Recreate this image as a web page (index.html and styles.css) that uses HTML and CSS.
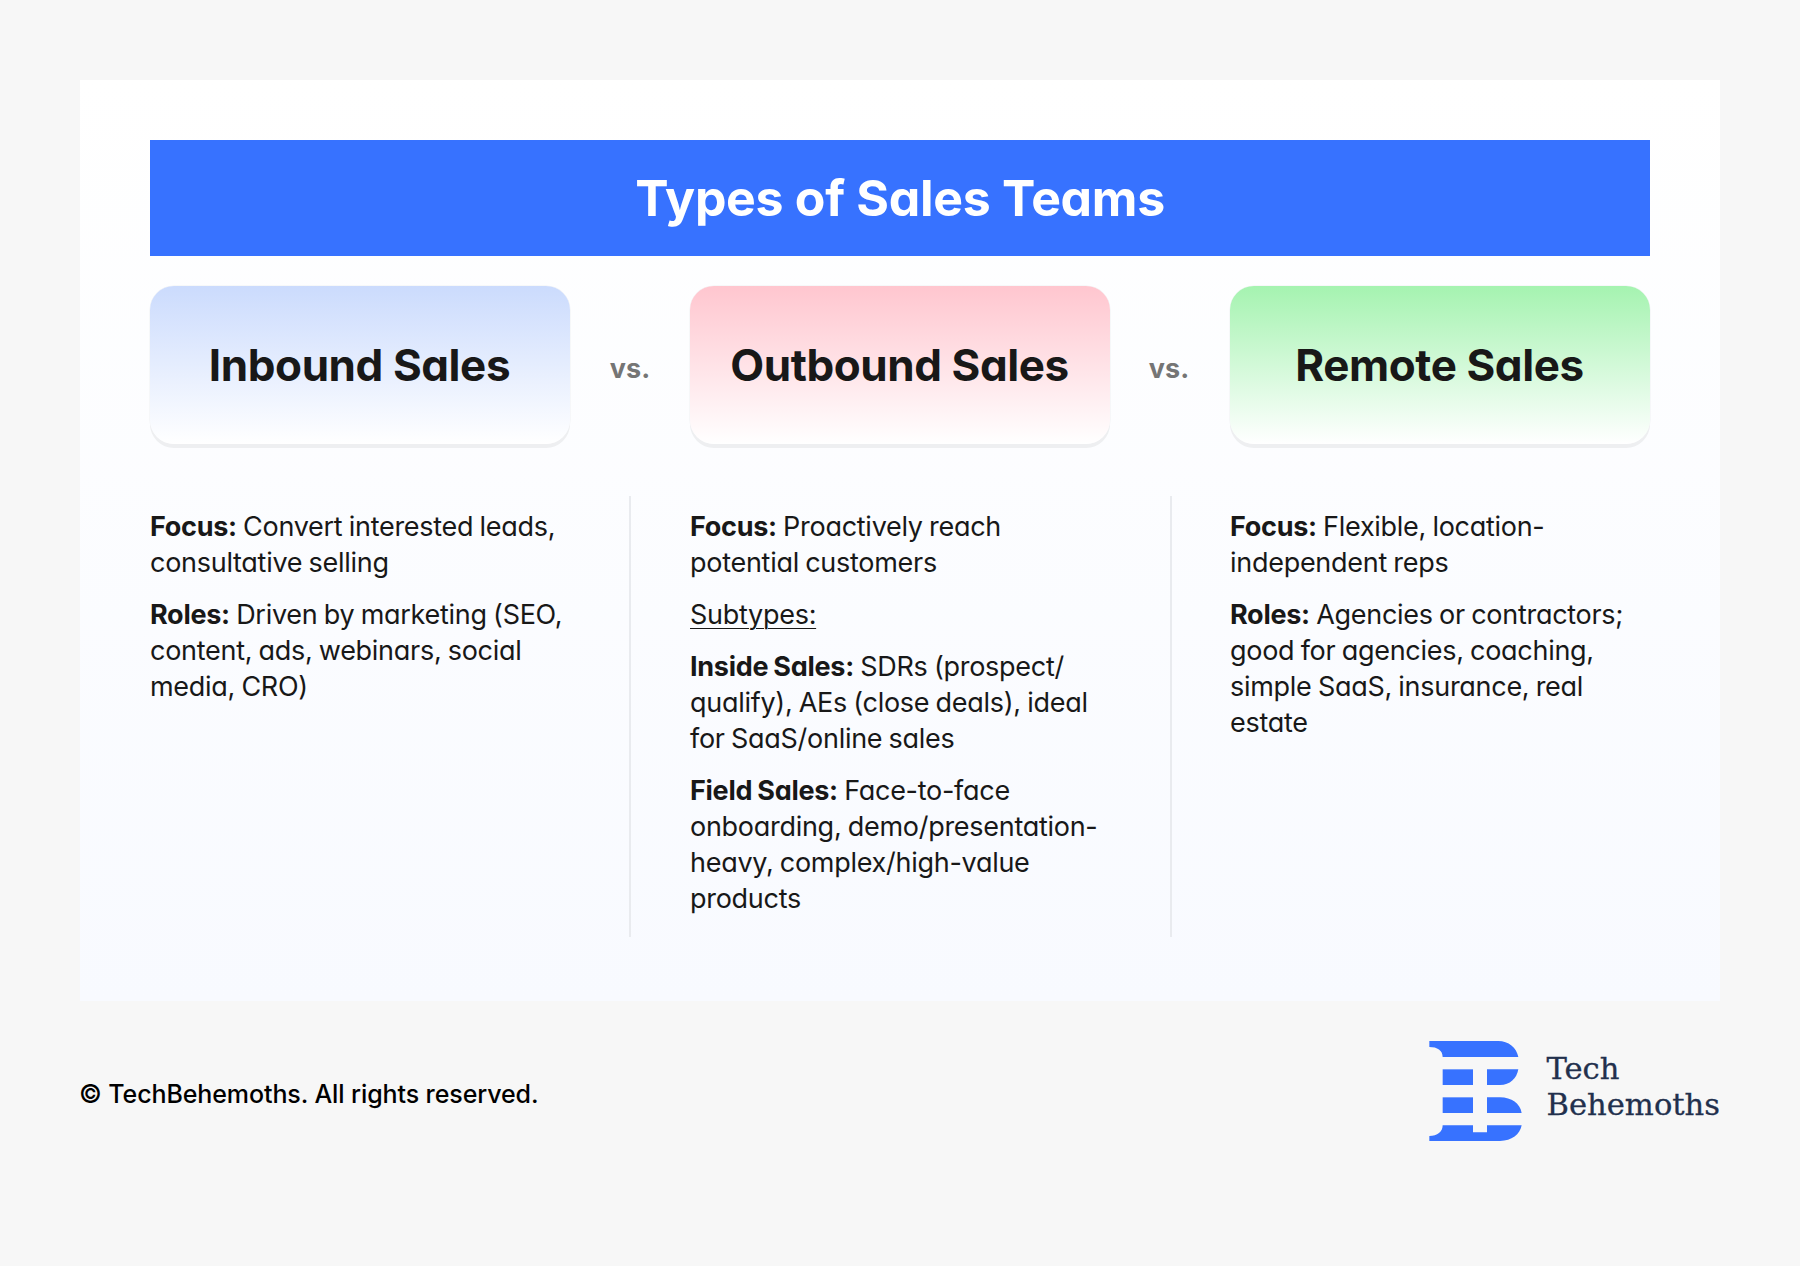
FILE: index.html
```html
<!DOCTYPE html>
<html lang="en">
<head>
<meta charset="utf-8">
<title>Types of Sales Teams</title>
<link rel="stylesheet" href="styles.css">
</head>
<body>
<main class="card">
  <h1 class="banner">Types of Sales Teams</h1>
  <section class="heads">
    <div class="box box-blue"><h2>Inbound Sales</h2></div>
    <div class="vs">vs.</div>
    <div class="box box-red"><h2>Outbound Sales</h2></div>
    <div class="vs vs-second">vs.</div>
    <div class="box box-green"><h2>Remote Sales</h2></div>
  </section>
  <section class="cols">
    <div class="col">
      <p><b>Focus:</b> Convert interested leads, consultative selling</p>
      <p><b>Roles:</b> Driven by marketing (SEO, content, ads, webinars, social media, CRO)</p>
    </div>
    <div class="col">
      <p><b>Focus:</b> Proactively reach potential customers</p>
      <p><u>Subtypes:</u></p>
      <p><b>Inside Sales:</b> SDRs (prospect/ qualify), AEs (close deals), ideal for SaaS/online sales</p>
      <p><b>Field Sales:</b> Face-to-face onboarding, demo/presentation-heavy, complex/high-value products</p>
    </div>
    <div class="col">
      <p><b>Focus:</b> Flexible, location-independent reps</p>
      <p><b>Roles:</b> Agencies or contractors; good for agencies, coaching, simple SaaS, insurance, real estate</p>
    </div>
  </section>
</main>
<footer class="foot">
  <div class="copy">© TechBehemoths. All rights reserved.</div>
  <div class="brand">
    <svg class="mark" viewBox="88 62 277 300" aria-hidden="true">
      <path d="M88 62H295C325 62 350 82 355 110H128C128 90 112 80 88 80Z"/>
      <path d="M128 147H219V194H128Z"/>
      <path d="M261 147H355C350 175 330 194 300 194H261Z"/>
      <path d="M128 231H219V278H128Z"/>
      <path d="M261 231H300C335 231 360 250 365 278H261Z"/>
      <path d="M128 315H219V336H261V315H365C360 342 335 362 300 362H88V347C112 347 128 335 128 315Z"/>
    </svg>
    <div class="name">Tech<br>Behemoths</div>
  </div>
</footer>
</body>
</html>
```
FILE: styles.css
```css
* { box-sizing: border-box; }
html, body { margin: 0; }
body {
  width: 1800px;
  height: 1266px;
  padding: 80px 80px 0;
  background: #f7f7f7;
  font-family: Inter, "Liberation Sans", sans-serif;
  font-feature-settings: "cv11" 1;
  color: #181818;
  overflow: hidden;
}
.card {
  height: 921px;
  padding: 60px 70px;
  background: linear-gradient(180deg, #ffffff 0%, #f8faff 100%);
}
.banner {
  margin: 0;
  height: 116px;
  display: flex;
  align-items: center;
  justify-content: center;
  background: #3772ff;
  color: #fff;
  font-size: 50px;
  font-weight: 700;
  letter-spacing: -0.3px;
}
.heads {
  margin-top: 30px;
  display: grid;
  grid-template-columns: 420px 120px 420px 120px 420px;
}
.box {
  height: 158px;
  border-radius: 24px;
  display: flex;
  align-items: center;
  justify-content: center;
  box-shadow: 0 4px 0 #eeeff1, 0 0 0 0.5px #f0f1f4;
}
.box h2 {
  margin: 0 0 0 -1px;
  font-size: 44px;
  font-weight: 700;
  letter-spacing: -0.42px;
}
.box-blue { background: linear-gradient(180deg, #cbdbfd 0%, #ffffff 100%); }
.box-red { background: linear-gradient(180deg, #ffc6cf 0%, #ffffff 100%); }
.box-green { background: linear-gradient(180deg, #a5f3b0 0%, #ffffff 100%); }
.vs {
  display: flex;
  align-items: center;
  justify-content: center;
  padding-top: 6px;
  color: #757575;
  font-size: 27px;
  font-weight: 700;
}
.vs-second { padding-right: 2px; }
.cols {
  margin-top: 52px;
  display: grid;
  grid-template-columns: 481px 541px 478px;
}
.col {
  height: 441px;
  padding: 13px 0 0 59px;
  border-right: 2px solid #e9ebef;
}
.col:first-child { padding-left: 0; }
.col:last-child { border-right: 0; padding-left: 58px; }
.col p {
  margin: 0 0 16px;
  font-size: 27px;
  line-height: 36px;
  letter-spacing: -0.28px;
  word-spacing: -1px;
}
.col b { font-weight: 700; }
.col u { text-underline-offset: 4px; text-decoration-thickness: 1px; }
.col:first-child p { padding-right: 54px; }
.col:nth-child(2) p { padding-right: 59px; }
.foot {
  margin-top: 40px;
  display: flex;
  justify-content: space-between;
  align-items: center;
}
.copy {
  font-size: 25px;
  font-weight: 500;
  color: #000;
  padding-top: 6px;
  margin-left: -1px;
  letter-spacing: -0.1px;
}
.brand { display: flex; align-items: center; gap: 24px; }
.mark { width: 93px; height: 100px; fill: #3772ff; display: block; }
.name {
  font-family: "DejaVu Serif", "Liberation Serif", serif;
  font-feature-settings: normal;
  font-size: 30.6px;
  line-height: 36px;
  color: #22304d;
  -webkit-text-stroke: 0.3px #22304d;
  margin-top: -9px;
}
```
